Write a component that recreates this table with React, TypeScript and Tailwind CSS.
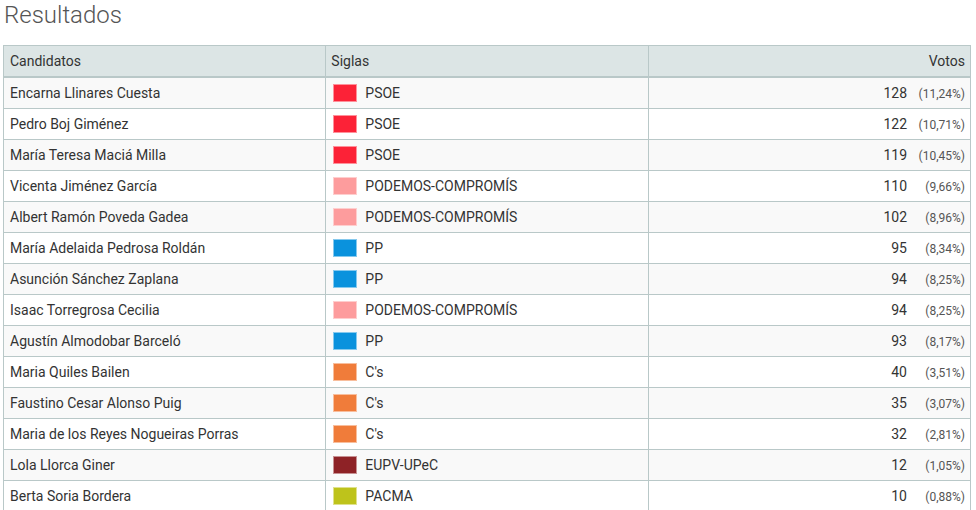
import React from "react";

type Row = {
  name: string;
  party: string;
  color: string;
  votes: number;
  pct: string;
};

const rows: Row[] = [
  { name: "Encarna Llinares Cuesta", party: "PSOE", color: "bg-[#fc2237]", votes: 128, pct: "11,24%" },
  { name: "Pedro Boj Giménez", party: "PSOE", color: "bg-[#fc2237]", votes: 122, pct: "10,71%" },
  { name: "María Teresa Maciá Milla", party: "PSOE", color: "bg-[#fc2237]", votes: 119, pct: "10,45%" },
  { name: "Vicenta Jiménez García", party: "PODEMOS-COMPROMÍS", color: "bg-[#fd9c9d]", votes: 110, pct: "9,66%" },
  { name: "Albert Ramón Poveda Gadea", party: "PODEMOS-COMPROMÍS", color: "bg-[#fd9c9d]", votes: 102, pct: "8,96%" },
  { name: "María Adelaida Pedrosa Roldán", party: "PP", color: "bg-[#0a92dd]", votes: 95, pct: "8,34%" },
  { name: "Asunción Sánchez Zaplana", party: "PP", color: "bg-[#0a92dd]", votes: 94, pct: "8,25%" },
  { name: "Isaac Torregrosa Cecilia", party: "PODEMOS-COMPROMÍS", color: "bg-[#fd9c9d]", votes: 94, pct: "8,25%" },
  { name: "Agustín Almodobar Barceló", party: "PP", color: "bg-[#0a92dd]", votes: 93, pct: "8,17%" },
  { name: "Maria Quiles Bailen", party: "C's", color: "bg-[#f07c3a]", votes: 40, pct: "3,51%" },
  { name: "Faustino Cesar Alonso Puig", party: "C's", color: "bg-[#f07c3a]", votes: 35, pct: "3,07%" },
  { name: "Maria de los Reyes Nogueiras Porras", party: "C's", color: "bg-[#f07c3a]", votes: 32, pct: "2,81%" },
  { name: "Lola Llorca Giner", party: "EUPV-UPeC", color: "bg-[#8e2226]", votes: 12, pct: "1,05%" },
  { name: "Berta Soria Bordera", party: "PACMA", color: "bg-[#bec31b]", votes: 10, pct: "0,88%" },
];

const App = () => {
  return (
    <div className="w-[976px] h-[510px] overflow-hidden bg-white font-['Roboto',sans-serif] text-[#333]">
      <h1 className="pl-[4px] pt-[1px] text-[24px] leading-[28px] font-light text-[#555]">
        Resultados
      </h1>

      <table className="mt-[16px] ml-[3px] w-[968px] table-fixed border-collapse text-[14px] leading-[18px]">
        <thead>
          <tr className="bg-[#dce5e5]">
            <th className="border border-[#b9c8c8] border-b-2 px-[6px] py-[6px] text-left font-normal">
              Candidatos
            </th>
            <th className="border border-[#b9c8c8] border-b-2 px-[5px] py-[6px] text-left font-normal">
              Siglas
            </th>
            <th className="border border-[#b9c8c8] border-b-2 px-[5px] py-[6px] text-right font-normal">
              Votos
            </th>
          </tr>
        </thead>
        <tbody>
          {rows.map((r, i) => (
            <tr key={i} className={i % 2 === 0 ? "bg-[#f9f9f9]" : "bg-white"}>
              <td className="border border-[#b9c8c8] px-[6px] py-[6px] whitespace-nowrap">
                <div className="h-[18px]">{r.name}</div>
              </td>
              <td className="border border-[#b9c8c8] pl-[7px] pr-[6px] py-[6px]">
                <div className="flex h-[18px] items-center gap-[8px]">
                  <span className={`inline-block w-[24px] h-[18px] border border-white/50 ${r.color}`} />
                  <span>{r.party}</span>
                </div>
              </td>
              <td className="border border-[#b9c8c8] px-[5px] py-[6px] whitespace-nowrap">
                <div className="flex h-[18px] items-baseline justify-end">
                  <span>{r.votes}</span>
                  <span className="w-[58px] text-right text-[12px] text-[#555]">
                    ({r.pct})
                  </span>
                </div>
              </td>
            </tr>
          ))}
        </tbody>
      </table>
    </div>
  );
};

export default App;
